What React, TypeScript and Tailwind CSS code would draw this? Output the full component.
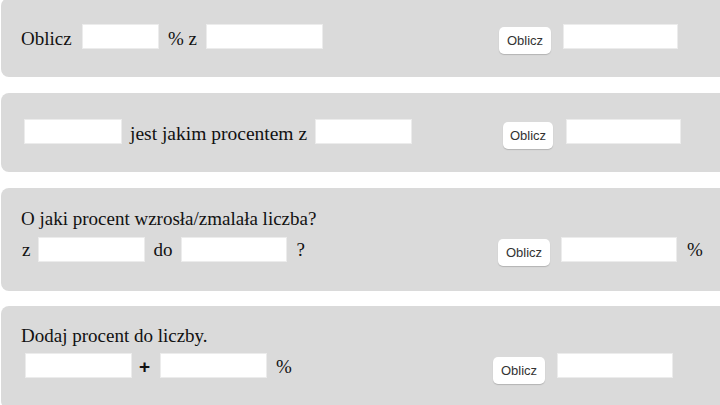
import React from "react";

const serif = { fontFamily: '"Liberation Serif", "Times New Roman", serif' };

function Inp({ w, cls = "" }: { w: string; cls?: string }) {
  return (
    <div className={`h-[25px] shrink-0 bg-white border border-[#ececec] ${w} ${cls}`} />
  );
}

function Btn({ w, cls = "" }: { w: string; cls?: string }) {
  return (
    <div
      className={`h-[27px] ${w} ${cls} mt-[3px] shrink-0 flex items-center justify-center rounded-[5px] bg-white text-[13px] text-[#333] shadow-[0_1px_1px_rgba(0,0,0,0.18)]`}
      style={{ fontFamily: '"Liberation Sans", Arial, sans-serif' }}
    >
      Oblicz
    </div>
  );
}

function T({ children, cls = "", size = "text-[19px]" }: { children: React.ReactNode; cls?: string; size?: string }) {
  return <span className={`mt-[2px] shrink-0 whitespace-pre ${size} leading-[25px] text-[#111] ${cls}`}>{children}</span>;
}

export default function App() {
  return (
    <div className="w-[720px] h-[405px] overflow-hidden bg-white" style={serif}>
      <div className="-mt-[2px] ml-[1px] w-[740px]">
        {/* Card 1 */}
        <div className="h-[79px] rounded-lg bg-[#dadada] pl-5 pt-[26px] flex items-start mb-[16px]">
          <div className="w-[478px] flex items-start shrink-0">
            <T cls="w-[51px]">Oblicz</T>
            <Inp w="w-[77px]" cls="ml-[10px]" />
            <T cls="ml-[9px] w-[29px]">% z</T>
            <Inp w="w-[117px]" cls="ml-[9px]" />
          </div>
          <Btn w="w-[52px]" />
          <Inp w="w-[115px]" cls="ml-[12px]" />
        </div>

        {/* Card 2 */}
        <div className="h-[79px] rounded-lg bg-[#dadada] pl-5 pt-[26px] flex items-start mb-[16px]">
          <div className="w-[482px] flex items-start shrink-0">
            <Inp w="w-[98px]" cls="ml-[3px]" />
            <T cls="ml-[8px] w-[177px]" size="text-[19.5px]">jest jakim procentem z</T>
            <Inp w="w-[97px]" cls="ml-[8px]" />
          </div>
          <Btn w="w-[50px]" />
          <Inp w="w-[115px]" cls="ml-[13px]" />
        </div>

        {/* Card 3 */}
        <div className="h-[103px] rounded-lg bg-[#dadada] pl-5 pt-[19px] mb-[15px]">
          <div className="text-[19px] leading-[24px] text-[#111]">O jaki procent wzrosła/zmalała liczba?</div>
          <div className="mt-[6px] flex items-start">
            <div className="w-[477px] flex items-start shrink-0">
              <T cls="ml-[1px] !mt-0">z</T>
              <Inp w="w-[107px]" cls="ml-[8px]" />
              <T cls="ml-[8px] !mt-0">do</T>
              <Inp w="w-[106px]" cls="ml-[9px]" />
              <T cls="ml-[9px] !mt-0">?</T>
            </div>
            <Btn w="w-[52px]" cls="!mt-[2px]" />
            <Inp w="w-[116px]" cls="ml-[11px]" />
            <T cls="ml-[10px] !mt-0">%</T>
          </div>
        </div>

        {/* Card 4 */}
        <div className="h-[103px] rounded-lg bg-[#dadada] pl-5 pt-[18px]">
          <div className="text-[19px] leading-[24px] text-[#111]">Dodaj procent do liczby.</div>
          <div className="mt-[5px] flex items-start">
            <div className="w-[472px] flex items-start shrink-0">
              <Inp w="w-[107px]" cls="ml-[4px]" />
              <span
                className="ml-[7px] w-[12px] shrink-0 text-[19px] font-bold leading-[25px] text-[#111] mt-[1px]"
                style={{ fontFamily: '"Liberation Sans", Arial, sans-serif' }}
              >
                +
              </span>
              <Inp w="w-[107px]" cls="ml-[9px]" />
              <T cls="ml-[9px] !mt-[1px]">%</T>
            </div>
            <Btn w="w-[52px]" cls="!mt-[4px]" />
            <Inp w="w-[116px]" cls="ml-[12px]" />
          </div>
        </div>
      </div>
    </div>
  );
}
